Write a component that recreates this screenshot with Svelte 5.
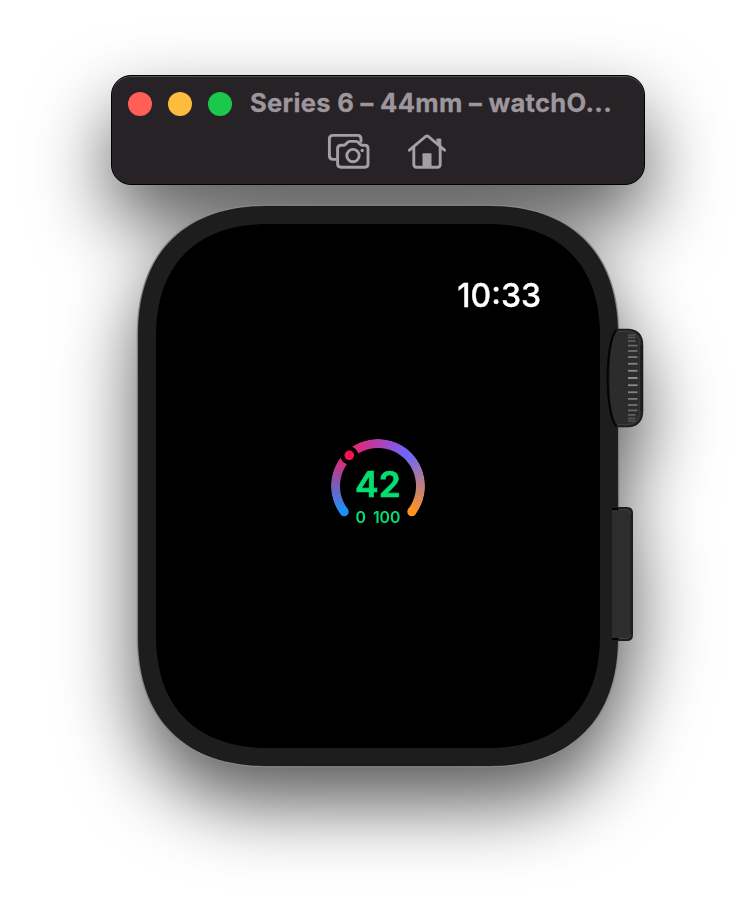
<script>
  const gap = (length, k) => length * (1 - k);

  // Rounded rectangle whose corners ease gradually into the straight sides.
  function smoothRect(x, y, w, h, l, k = 0.638) {
    const c = gap(l, k);
    const r = x + w;
    const b = y + h;
    return `M${x + l} ${y}H${r - l}C${r - c} ${y} ${r} ${y + c} ${r} ${y + l}V${b - l}C${r} ${b - c} ${r - c} ${b} ${r - l} ${b}H${x + l}C${x + c} ${b} ${x} ${b - c} ${x} ${b - l}V${y + l}C${x} ${y + c} ${x + c} ${y} ${x + l} ${y}Z`;
  }

  const ridges = Array.from({ length: 17 }, (_, i) => {
    const t = (i - 8) / 8;
    return { y: 49 + 43 * Math.sin(t * 1.3) / Math.sin(1.3), light: 0.5 - 0.35 * Math.abs(t), edge: Math.abs(t) > 0.7 ? 4 : 0 };
  });
</script>

<main>
  <div class="simulator">
    <header>
      <div class="title-row">
        <i class="light close"></i>
        <i class="light minimize"></i>
        <i class="light zoom"></i>
        <span class="title">Series 6 – 44mm – watchO...</span>
      </div>
      <div class="tools">
        <svg width="44" height="36" viewBox="0 0 44 36" fill="none" stroke="#a59fa5" stroke-width="2.9" stroke-linejoin="round" stroke-linecap="round">
          <path d="M8.5 26.4H6Q2.4 26.4 2.4 22.8V6Q2.4 2.4 6 2.4H30.5Q34 2.4 34 6V8.4" />
          <path d="M14.2 12.2H16.7Q18 12.2 19 11L20.4 9.5Q21.4 8.4 22.8 8.4H29.1Q30.5 8.4 31.5 9.5L32.9 11Q33.9 12.2 35.2 12.2H37.6Q41 12.2 41 15.5V31Q41 34.2 37.6 34.2H14.2Q10.6 34.2 10.6 31V15.5Q10.6 12.2 14.2 12.2Z" />
          <circle cx="26" cy="22.6" r="6.2" />
          <circle cx="35.2" cy="17.5" r="1.7" fill="#a59fa5" stroke="none" />
        </svg>
        <svg width="40" height="36" viewBox="0 0 40 36" fill="none" stroke="#a59fa5" stroke-width="2.9" stroke-linejoin="round" stroke-linecap="round">
          <path d="M2.4 17.2L18.6 3.5Q20 2.4 21.4 3.5L37.6 17.2" />
          <path d="M6.8 14.5V31.5Q6.8 34.2 9.6 34.2H30.4Q33.2 34.2 33.2 31.5V14.5" />
          <path d="M30.2 6H33.8V14L30.2 11Z" fill="#a59fa5" stroke-width="1" />
          <path d="M15.5 34V21.2Q15.5 20.2 16.5 20.2H23.5Q24.5 20.2 24.5 21.2V34Z" fill="#a59fa5" stroke="none" />
        </svg>
      </div>
    </header>

    <section class="watch">
      <svg class="shell" width="508" height="562" viewBox="0 0 508 562" fill="none">
        <path d={smoothRect(-0.3, -0.3, 482.6, 562.6, 130)} fill="#8b8b8b" />
        <path d={smoothRect(1.1, 1.1, 479.8, 559.8, 129)} fill="#1d1d1d" stroke="#000" stroke-opacity=".35" stroke-width=".7" />
        <path d={smoothRect(19, 19, 444, 524, 112)} fill="#000" />
        <g transform="translate(470 124)">
          <path d="M10 .5H22Q35.5 2 35.5 16V82Q35.5 96 22 97.5H10C-1 90 -1 8 10 .5Z" fill="#2c2c2c" stroke="#1b1b1b" stroke-width="1.5" />
          <path d="M9.5 1C-2.3 12 -2.3 86 9.5 97" stroke="#030303" stroke-width="2" />
          <path d="M11 2.5H22Q33 4 33 17V81Q33 94 22 95.5H11" stroke="#414141" stroke-width=".8" />
          <path d="M34.5 16V82" stroke="#1b1b1b" stroke-width="2.4" />
          {#each ridges as ridge}
            <path d="M21 {ridge.y}H{30.5 - ridge.edge * 0.5}" stroke="#fff" stroke-opacity={ridge.light} stroke-width="1.8" />
          {/each}
        </g>
        <g transform="translate(475 302)">
          <path d="M0 0H15Q21 0 21 6V128Q21 134 15 134H0Z" fill="#1d1d1d" />
          <path d="M0 3H14.5Q18.5 3 18.5 7V127Q18.5 131 14.5 131H0Z" fill="#2d2d2d" />
          <path d="M0 2H6M0 132H6" stroke="#000" stroke-width="2" />
          <path d="M7 2.5H14Q18.5 2.5 18.5 7M7 131.5H14Q18.5 131.5 18.5 127" stroke="#474747" stroke-width=".8" />
        </g>
      </svg>
      <div class="screen">
        <time>10:33</time>
        <div class="gauge">
          <div class="arc"></div>
          <svg class="marks" width="94" height="94" viewBox="0 0 94 94">
            <circle cx="13.2" cy="72.8" r="4.5" fill="#1a90fd" />
            <circle cx="80.8" cy="72.8" r="4.5" fill="#ff951f" />
            <circle cx="18.3" cy="16.3" r="9" fill="#000" />
            <circle cx="18.3" cy="16.3" r="4.8" fill="#fc1150" />
          </svg>
          <strong>42</strong>
          <div class="range"><span>0</span><span>100</span></div>
        </div>
      </div>
    </section>
  </div>
</main>

<style>
  :global(body) {
    margin: 0;
    background: #fff;
  }
  main {
    box-sizing: border-box;
    width: 756px;
    height: 916px;
    padding: 75px 111px 0;
    overflow: hidden;
    background: #fff;
    font-family: Inter, "Liberation Sans", sans-serif;
  }
  .simulator {
    width: 534px;
    filter: drop-shadow(0 36px 38px rgba(0, 0, 0, 0.65));
  }
  header {
    box-sizing: border-box;
    width: 534px;
    height: 110px;
    padding: 14px 16px 0;
    border: 1px solid #000;
    border-radius: 20px;
    background: #272226;
    box-shadow: inset 0 1px 0 #524e53;
  }
  .title-row {
    display: flex;
    align-items: center;
    height: 28px;
    gap: 16px;
  }
  .light {
    width: 24px;
    height: 24px;
    border-radius: 50%;
  }
  .close { background: #ff5f57; }
  .minimize { background: #febc3e; }
  .zoom { background: #1bc84b; }
  .title {
    margin: -2px 0 0 2px;
    color: #9d979d;
    font-size: 25.6px;
    font-weight: 700;
    letter-spacing: 0.3px;
    line-height: 28px;
    white-space: nowrap;
    -webkit-text-stroke: 0.3px #9d979d;
  }
  .tools {
    display: flex;
    justify-content: center;
    gap: 36px;
    margin-top: 15px;
    padding-left: 18px;
  }
  .tools svg { display: block; }
  .watch {
    position: relative;
    width: 508px;
    height: 562px;
    margin: 20px 0 0 26px;
  }
  .shell {
    position: absolute;
    inset: 0;
    overflow: visible;
  }
  .screen {
    position: relative;
    display: flex;
    flex-direction: column;
    align-items: center;
    box-sizing: border-box;
    width: 482px;
    height: 562px;
    padding-top: 71px;
  }
  time {
    align-self: flex-end;
    margin-right: 78px;
    color: #fff;
    font-size: 32px;
    font-weight: 500;
    line-height: 40px;
    -webkit-text-stroke: 0.3px #fff;
  }
  .gauge {
    position: relative;
    display: flex;
    flex-direction: column;
    align-items: center;
    width: 94px;
    height: 94px;
    margin-top: 123px;
    color: #04de71;
  }
  .arc {
    position: absolute;
    inset: 0;
    border-radius: 50%;
    background: conic-gradient(from 232.6deg, #1a90fd 0deg, #f51d62 85deg, #6e64ff 170deg, #ff951f 254.8deg, transparent 255deg);
    mask: radial-gradient(circle, transparent 37.5px, #000 38.5px);
  }
  .marks {
    position: absolute;
    inset: 0;
  }
  strong {
    margin-top: 25px;
    font-size: 35.5px;
    font-weight: 600;
    line-height: 42px;
    -webkit-text-stroke: 0.7px #04de71;
  }
  .range {
    display: flex;
    gap: 7px;
    margin-top: 2px;
    font-size: 15.8px;
    font-weight: 600;
    line-height: 20px;
  }
</style>
